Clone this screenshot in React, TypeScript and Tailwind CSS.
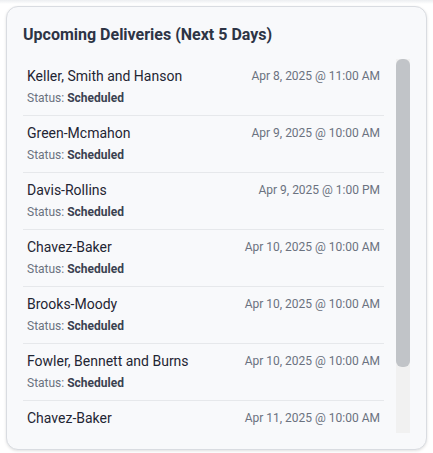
import React from 'react';

interface Delivery {
  customer: string;
  date: string;
  status: string;
}

const deliveries: Delivery[] = [
  { customer: 'Keller, Smith and Hanson', date: 'Apr 8, 2025 @ 11:00 AM', status: 'Scheduled' },
  { customer: 'Green-Mcmahon', date: 'Apr 9, 2025 @ 10:00 AM', status: 'Scheduled' },
  { customer: 'Davis-Rollins', date: 'Apr 9, 2025 @ 1:00 PM', status: 'Scheduled' },
  { customer: 'Chavez-Baker', date: 'Apr 10, 2025 @ 10:00 AM', status: 'Scheduled' },
  { customer: 'Brooks-Moody', date: 'Apr 10, 2025 @ 10:00 AM', status: 'Scheduled' },
  { customer: 'Fowler, Bennett and Burns', date: 'Apr 10, 2025 @ 10:00 AM', status: 'Scheduled' },
  { customer: 'Chavez-Baker', date: 'Apr 11, 2025 @ 10:00 AM', status: 'Scheduled' },
];

const App: React.FC = () => {
  return (
    <div className="min-h-screen bg-white font-['Roboto','Liberation_Sans',sans-serif]">
      {/* shadow edge from the panel above */}
      <div className="h-1 bg-gradient-to-b from-[#eceef1] to-white" />

      <div className="mx-1.5 mt-0.5 h-[444px] flex flex-col rounded-xl border border-[#d9dce1] bg-[#f8f9fb] px-4 pt-4 pb-4 shadow-[0_1px_3px_rgba(0,0,0,0.12)]">
        <h2 className="text-base leading-6 font-bold text-[#2d3445] mb-3">
          Upcoming Deliveries (Next 5 Days)
        </h2>

        <div className="flex-1 min-h-0 flex">
          <ul className="flex-1 min-w-0 overflow-hidden pr-3">
            {deliveries.map((d, i) => (
              <li
                key={i}
                className="px-1 pt-[7px] pb-[9px] border-b border-[#e6e8eb] last:border-b-0"
              >
                <div className="flex items-center justify-between h-5">
                  <span className="text-sm text-[#1f2533]">{d.customer}</span>
                  <span className="text-xs text-[#6b7280]">{d.date}</span>
                </div>
                <div className="mt-1 h-4 text-xs leading-4 text-[#6b7280]">
                  Status: <span className="font-bold text-[#3a4150]">{d.status}</span>
                </div>
              </li>
            ))}
          </ul>

          {/* scrollbar */}
          <div className="w-[14px] shrink-0 bg-[#f1f1f1]">
            <div className="h-[308px] rounded-md bg-[#c1c4c8]" />
          </div>
        </div>
      </div>
    </div>
  );
};

export default App;
